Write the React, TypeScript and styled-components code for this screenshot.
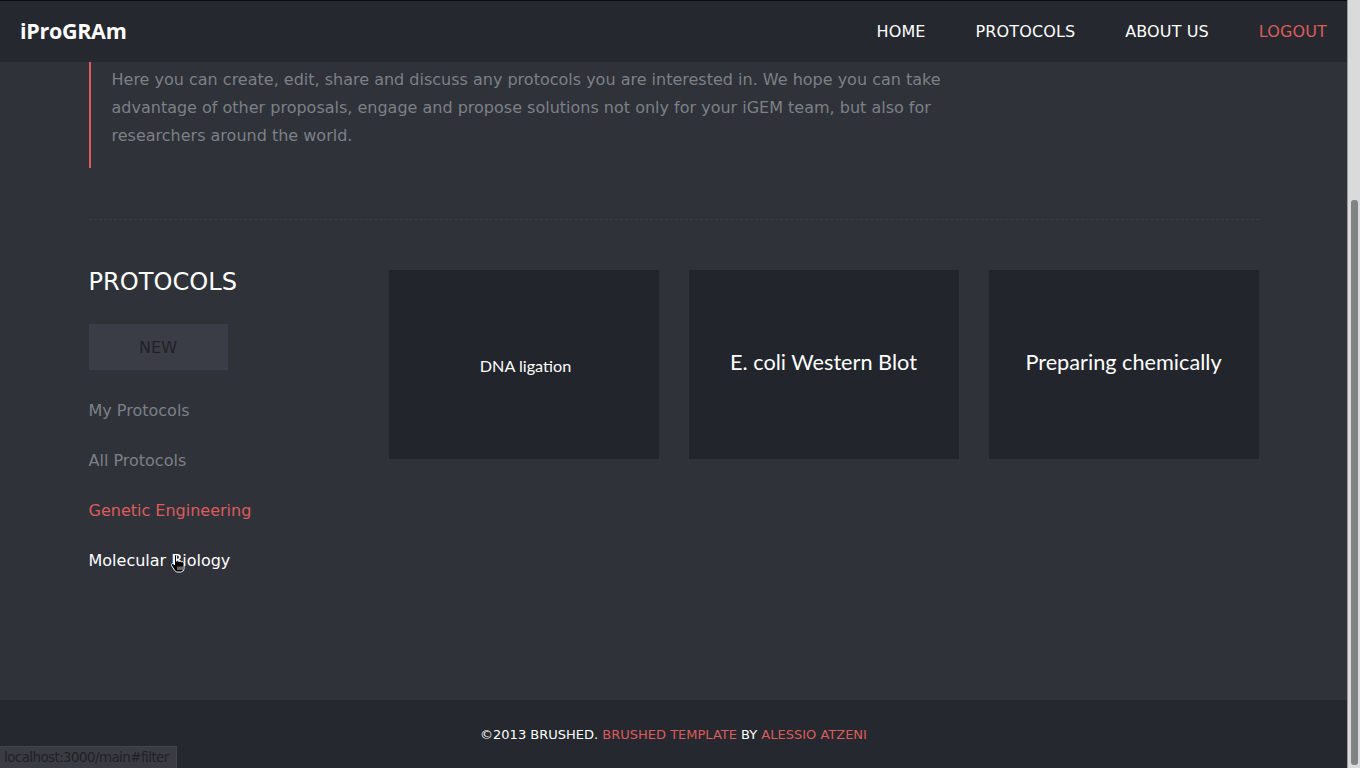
import React from "react";
import styled, { createGlobalStyle } from "styled-components";

const Global = createGlobalStyle`
  html, body { margin: 0; padding: 0; height: 100%; overflow: hidden; }
  body { background: #2f3239; font-family: "DejaVu Sans", sans-serif; }
  * { box-sizing: border-box; }
`;

const Screen = styled.div`
  position: relative;
  display: flex;
  width: 1360px;
  height: 768px;
  overflow: hidden;
`;

const Page = styled.div`
  flex: 1;
  display: flex;
  flex-direction: column;
  background: #2f3239;
  min-width: 0;
`;

const Header = styled.header`
  height: 62px;
  flex-shrink: 0;
  display: flex;
  align-items: center;
  justify-content: space-between;
  padding: 0 20px;
  background: #25282e;
  border-top: 1px solid #0c0d0f;
`;

const Logo = styled.div`
  font-family: "Open Sans", sans-serif;
  font-weight: 700;
  font-size: 21.5px;
  color: #ffffff;
  letter-spacing: -0.3px;
  margin-top: -2px;
`;

const Nav = styled.nav`
  display: flex;
  gap: 50px;
`;

const NavLink = styled.a<{ $accent?: boolean }>`
  font-size: 16px;
  letter-spacing: 0.12px;
  color: ${(p) => (p.$accent ? "#de5b5c" : "#ffffff")};
  text-decoration: none;
  text-transform: uppercase;
`;

const Main = styled.main`
  flex: 1;
  width: 1170px;
  margin: 0 auto;
  display: flex;
  flex-direction: column;
`;

const Quote = styled.blockquote`
  margin: 0;
  height: 106px;
  border-left: 2px solid #de5b5c;
  padding: 4px 0 0 21px;
  max-width: 880px;
  color: #7d8087;
  font-size: 16px;
  line-height: 28px;
`;

const Divider = styled.hr`
  margin: 51px 0 50px;
  border: 0;
  border-top: 1px dashed #3a3d45;
  height: 0;
`;

const Row = styled.section`
  display: flex;
`;

const Sidebar = styled.aside`
  width: 300px;
  flex-shrink: 0;
  display: flex;
  flex-direction: column;
  align-items: flex-start;
`;

const Title = styled.h2`
  margin: 0;
  font-size: 24.1px;
  line-height: 24px;
  font-weight: 400;
  color: #ffffff;
`;

const NewButton = styled.button`
  margin-top: 30px;
  width: 139px;
  height: 46px;
  border: 0;
  background: #3a3d45;
  color: #202228;
  font-family: "DejaVu Sans", sans-serif;
  font-size: 16px;
`;

const Filters = styled.ul`
  list-style: none;
  margin: 16px 0 0;
  padding: 0;
`;

const Filter = styled.li<{ $tone: "muted" | "active" | "hover" }>`
  position: relative;
  font-size: 16px;
  line-height: 50px;
  color: ${(p) =>
    p.$tone === "active" ? "#de5b5c" : p.$tone === "hover" ? "#ffffff" : "#7d8087"};
`;

const Cursor = styled.svg`
  position: absolute;
  left: 81px;
  top: 17px;
  width: 16px;
  height: 21px;
`;

const Cards = styled.div`
  flex: 1;
  display: grid;
  grid-template-columns: repeat(3, 270px);
  gap: 30px;
  align-content: start;
`;

const Card = styled.div<{ $small?: boolean }>`
  height: 189px;
  background: #22252c;
  display: flex;
  align-items: center;
  justify-content: center;
  color: #ffffff;
  font-family: "Lato", sans-serif;
  font-size: ${(p) => (p.$small ? "16.2px" : "21.7px")};
  padding-bottom: ${(p) => (p.$small ? "0" : "6px")};
  padding-top: ${(p) => (p.$small ? "2px" : "0")};
  padding-left: ${(p) => (p.$small ? "4px" : "0")};
`;

const Footer = styled.footer`
  height: 68px;
  flex-shrink: 0;
  background: #25282e;
  display: flex;
  align-items: center;
  justify-content: center;
  font-size: 13px;
  color: #ffffff;
  text-transform: uppercase;
  padding-top: 1px;
`;

const FooterLink = styled.span`
  color: #de5b5c;
`;

const ScrollTrack = styled.div`
  width: 13px;
  flex-shrink: 0;
  background: #dadada;
  border-left: 1px solid #9a9a9a;
  padding: 200px 2px 3px 3px;
  display: flex;
`;

const ScrollThumb = styled.div`
  flex: 1;
  background: #7f8383;
  border-radius: 3px;
`;

const StatusBar = styled.div`
  position: absolute;
  left: 0;
  bottom: 0;
  height: 22px;
  width: 177px;
  padding: 0 4px;
  display: flex;
  align-items: center;
  background: #393c42;
  border-top: 1px solid #42454b;
  border-right: 1px solid #42454b;
  color: #1f2126;
  font-family: "DejaVu Sans", sans-serif;
  font-size: 13.4px;
  letter-spacing: -0.55px;
  white-space: nowrap;
  overflow: hidden;
`;

export default function App() {
  return (
    <>
      <Global />
      <Screen>
        <Page>
          <Header>
            <Logo>iProGRAm</Logo>
            <Nav>
              <NavLink href="#">Home</NavLink>
              <NavLink href="#">Protocols</NavLink>
              <NavLink href="#">About us</NavLink>
              <NavLink href="#" $accent>
                Logout
              </NavLink>
            </Nav>
          </Header>
          <Main>
            <Quote>
              Here you can create, edit, share and discuss any protocols you are
              interested in. We hope you can take advantage of other proposals,
              engage and propose solutions not only for your iGEM team, but also
              for researchers around the world.
            </Quote>
            <Divider />
            <Row>
              <Sidebar>
                <Title>PROTOCOLS</Title>
                <NewButton>NEW</NewButton>
                <Filters>
                  <Filter $tone="muted">My Protocols</Filter>
                  <Filter $tone="muted">All Protocols</Filter>
                  <Filter $tone="active">Genetic Engineering</Filter>
                  <Filter $tone="hover">
                    Molecular Biology
                    <Cursor viewBox="0 0 16 21" aria-hidden="true">
                      <path
                        d="M5 1.5c.8 0 1.5.7 1.5 1.5v5.2c.3-.3.7-.4 1.1-.4.6 0 1.1.3 1.3.8.3-.3.7-.5 1.2-.5.6 0 1.1.3 1.3.9.3-.2.6-.3 1-.3.9 0 1.6.7 1.6 1.6V15.5c0 2-1.6 3.5-3.5 3.5H7.6c-1.2 0-2.3-.6-3-1.6L1.6 12.6c-.4-.7-.2-1.5.5-1.9.6-.4 1.4-.2 1.8.4l.6.9V3c0-.8.7-1.5 1.5-1.5z"
                        fill="#000"
                        stroke="#fff"
                        strokeWidth="1"
                      />
                      <path d="M8 13.5v3.5M10 13.5v3.5M12 13.5v3.5" stroke="#fff" strokeWidth="0.8" />
                    </Cursor>
                  </Filter>
                </Filters>
              </Sidebar>
              <Cards>
                <Card $small>DNA ligation</Card>
                <Card>E. coli Western Blot</Card>
                <Card>Preparing chemically</Card>
              </Cards>
            </Row>
          </Main>
          <Footer>
            ©2013 Brushed.&nbsp;<FooterLink>Brushed Template</FooterLink>&nbsp;by&nbsp;
            <FooterLink>Alessio Atzeni</FooterLink>
          </Footer>
        </Page>
        <ScrollTrack>
          <ScrollThumb />
        </ScrollTrack>
        <StatusBar>localhost:3000/main#filter</StatusBar>
      </Screen>
    </>
  );
}
